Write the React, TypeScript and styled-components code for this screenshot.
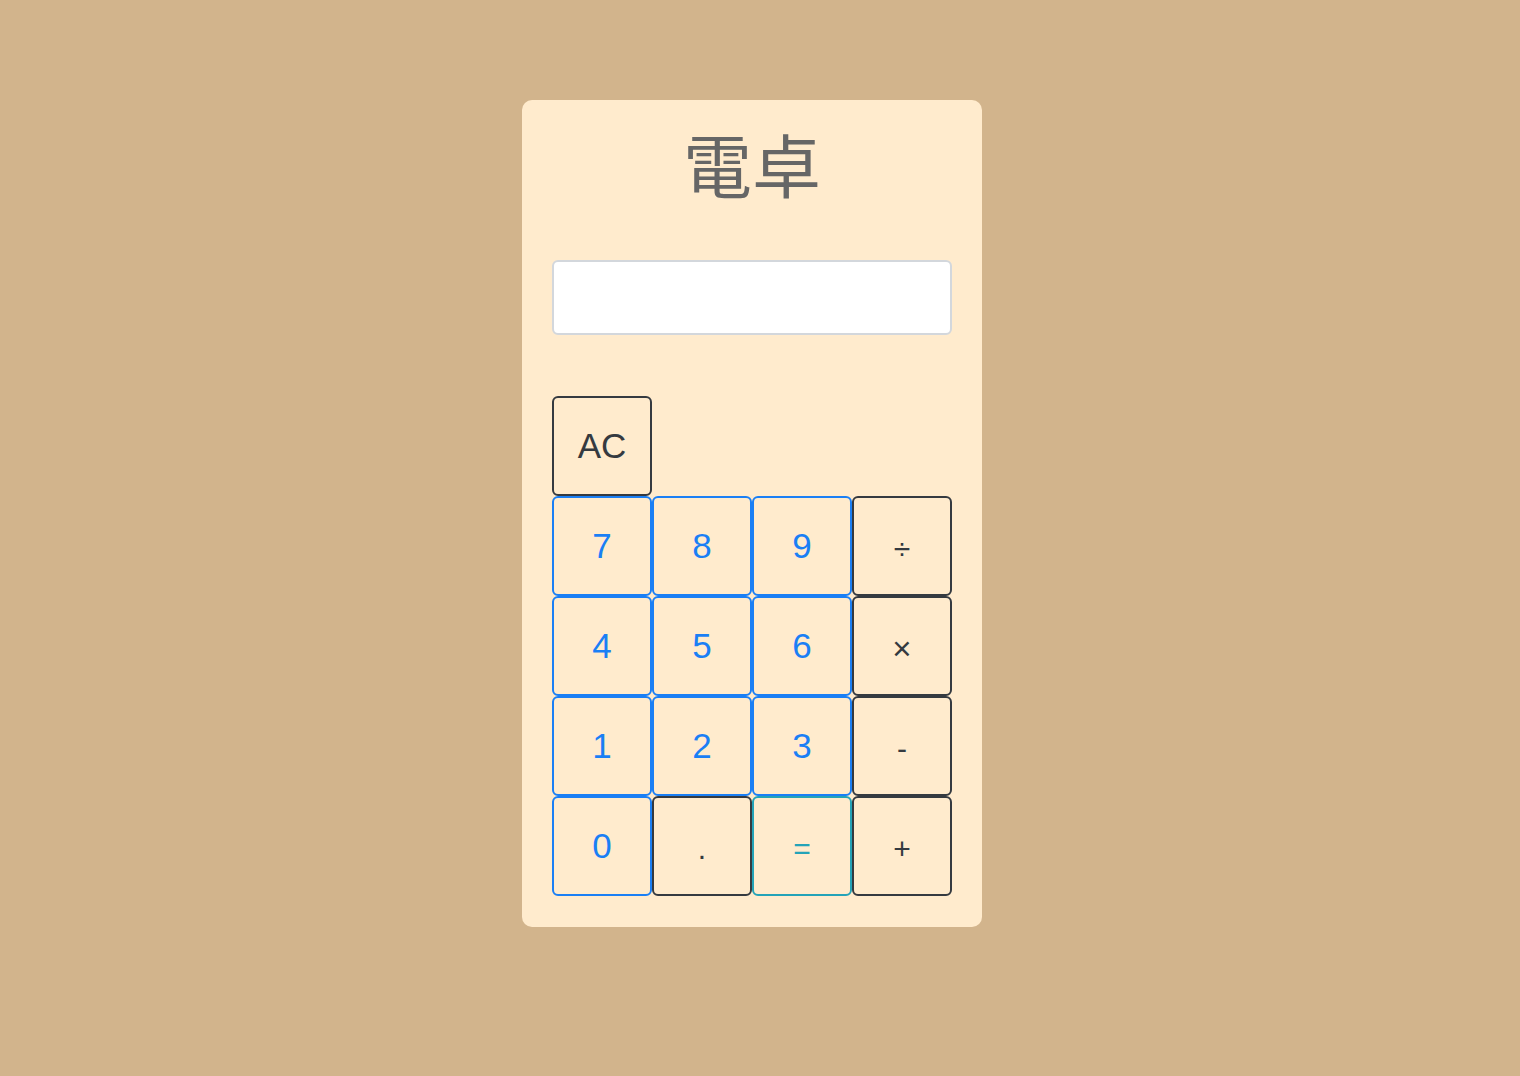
import React from 'react';
import styled, { createGlobalStyle } from 'styled-components';

const GlobalStyle = createGlobalStyle`
  html, body {
    margin: 0;
    padding: 0;
    background: #d2b48c;
    font-family: "Noto Sans CJK JP", "Noto Sans", sans-serif;
  }
`;

const Page = styled.div`
  min-height: 1076px;
  display: flex;
  justify-content: center;
  align-items: flex-start;
  padding: 100px 16px 0 0;
  box-sizing: border-box;
`;

const Card = styled.div`
  width: 460px;
  box-sizing: border-box;
  padding: 29px 30px 31px;
  background: #ffebcd;
  border-radius: 10px;
  display: flex;
  flex-direction: column;
`;

const Title = styled.h1`
  margin: 0;
  font-size: 69px;
  line-height: 68px;
  font-weight: 400;
  color: #666666;
  text-align: center;
`;

const Display = styled.input`
  margin-top: 63px;
  width: 400px;
  height: 75px;
  box-sizing: border-box;
  border: 2px solid #d3d7dc;
  border-radius: 6px;
  background: #ffffff;
  font-size: 32px;
  padding: 0 12px;
  outline: none;
`;

const Keys = styled.div`
  margin-top: 61px;
  display: grid;
  grid-template-columns: repeat(4, 100px);
  grid-auto-rows: 100px;
`;

type Tone = 'primary' | 'dark' | 'info';

const toneColor: Record<Tone, string> = {
  primary: '#1a7ff5',
  dark: '#353a40',
  info: '#24a3b8',
};

// operator keys sit a touch lower and use a smaller glyph size
const Key = styled.button<{ $tone: Tone; $size: number }>`
  box-sizing: border-box;
  width: 100px;
  height: 100px;
  margin: 0;
  padding: ${(p) => (p.$size < 34 ? '5px 0 0' : '0 0 2px')};
  background: transparent;
  border: 2px solid ${(p) => toneColor[p.$tone]};
  border-radius: 6px;
  color: ${(p) => toneColor[p.$tone]};
  font-family: "Liberation Sans", "Noto Sans", sans-serif;
  font-size: ${(p) => p.$size}px;
  line-height: 1;
  cursor: pointer;
`;

const Spacer = styled.div`
  grid-column: span 3;
`;

const rows: { label: string; tone: Tone; size: number }[] = [
  { label: '7', tone: 'primary', size: 35 },
  { label: '8', tone: 'primary', size: 35 },
  { label: '9', tone: 'primary', size: 35 },
  { label: '÷', tone: 'dark', size: 30 },
  { label: '4', tone: 'primary', size: 35 },
  { label: '5', tone: 'primary', size: 35 },
  { label: '6', tone: 'primary', size: 35 },
  { label: '×', tone: 'dark', size: 33 },
  { label: '1', tone: 'primary', size: 35 },
  { label: '2', tone: 'primary', size: 35 },
  { label: '3', tone: 'primary', size: 35 },
  { label: '-', tone: 'dark', size: 30 },
  { label: '0', tone: 'primary', size: 35 },
  { label: '.', tone: 'dark', size: 30 },
  { label: '=', tone: 'info', size: 30 },
  { label: '+', tone: 'dark', size: 30 },
];

export default function App() {
  return (
    <>
      <GlobalStyle />
      <Page>
        <Card>
          <Title>電卓</Title>
          <Display type="text" readOnly />
          <Keys>
            <Key $tone="dark" $size={35}>AC</Key>
            <Spacer />
            {rows.map((k) => (
              <Key key={k.label} $tone={k.tone} $size={k.size}>
                {k.label}
              </Key>
            ))}
          </Keys>
        </Card>
      </Page>
    </>
  );
}
